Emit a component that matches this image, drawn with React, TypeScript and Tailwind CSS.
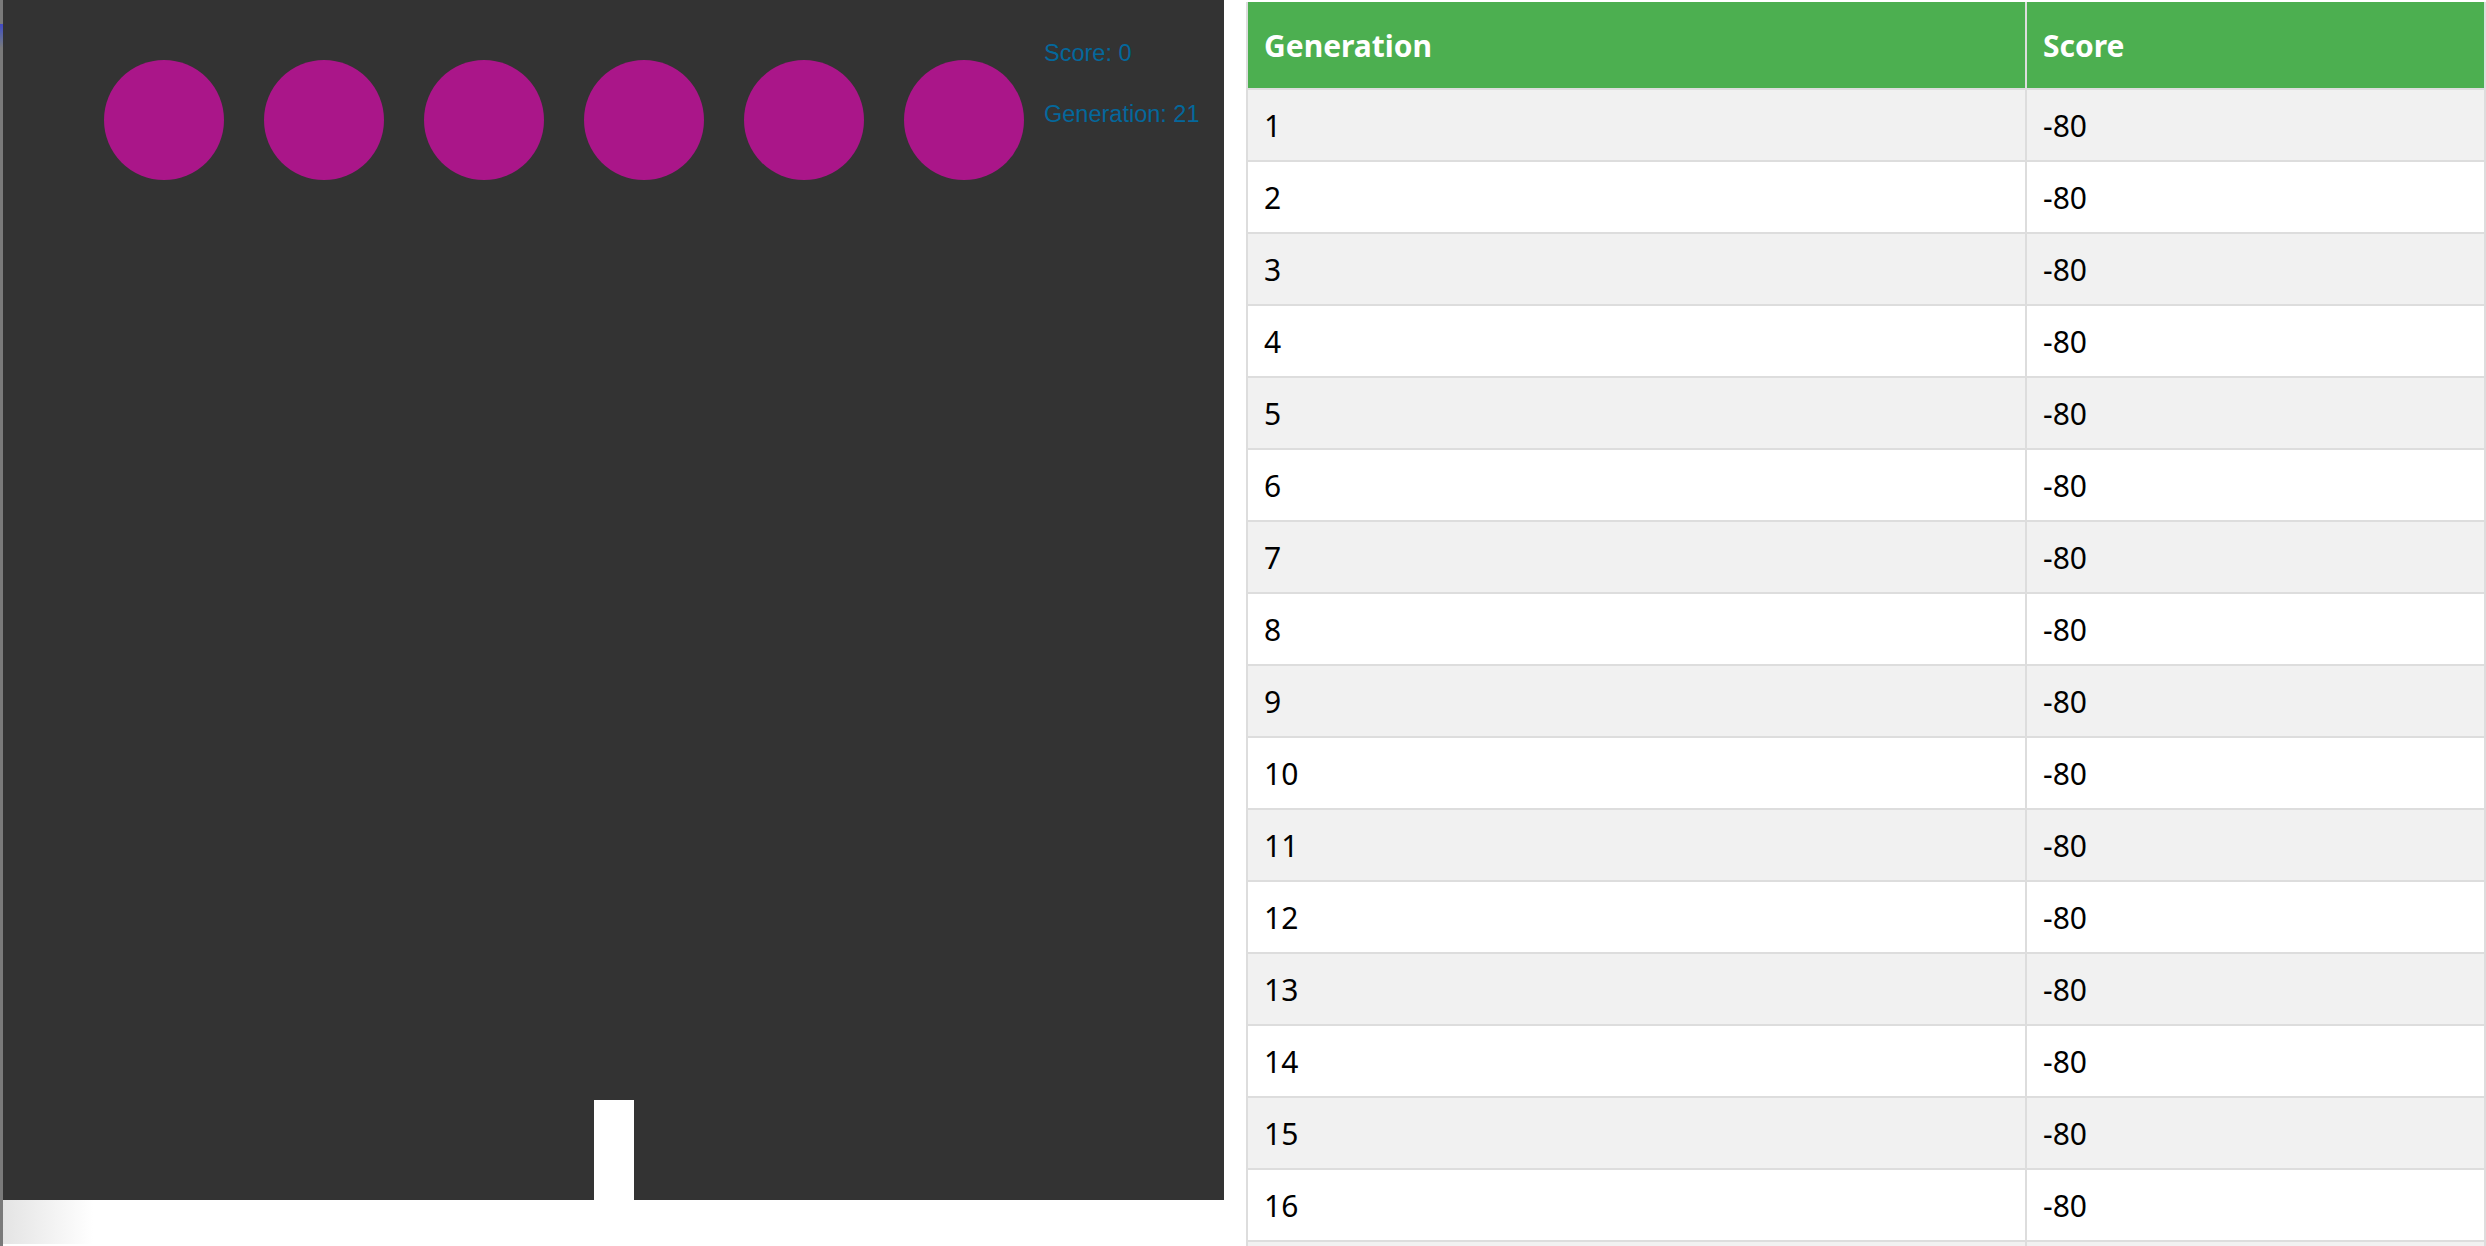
import React from 'react'

const ROWS = Array.from({ length: 17 }, (_, i) => ({ generation: i + 1, score: -80 }))
const BALLS = [0, 1, 2, 3, 4, 5]

function GameCanvas() {
  return (
    <div className="relative h-[1200px] w-[1221px] bg-[#333333] font-['Liberation_Sans',Arial,sans-serif]">
      {BALLS.map((i) => (
        <div
          key={i}
          className="absolute top-[60px] h-[120px] w-[120px] rounded-full bg-[#aa1689]"
          style={{ left: 101 + i * 160 }}
        />
      ))}
      <p className="absolute left-[1041px] top-[42px] text-[23.5px] leading-none text-[#04689c]">Score: 0</p>
      <p className="absolute left-[1041px] top-[103px] text-[23.5px] leading-none text-[#04689c]">Generation: 21</p>
      {/* paddle */}
      <div className="absolute left-[591px] top-[1100px] h-[100px] w-[40px] bg-white" />
    </div>
  )
}

function ScoreTable() {
  return (
    <div className="font-['Noto_Sans',sans-serif] text-black">
      <div className="flex h-[88px] border-b-2 border-r-2 border-[#dddddd] bg-[#4caf50] text-[30px] font-bold text-white">
        <div className="flex w-[779px] items-center border-l-2 border-[#dddddd] px-4">Generation</div>
        <div className="flex flex-1 items-center border-l-2 border-[#dddddd] px-4">Score</div>
      </div>
      {ROWS.map((r) => (
        <div
          key={r.generation}
          className={`flex h-[72px] border-b-2 border-r-2 border-[#dddddd] text-[30px] ${r.generation % 2 === 1 ? 'bg-[#f1f1f1]' : 'bg-white'}`}
        >
          <div className="flex w-[779px] items-center border-l-2 border-[#dddddd] px-4">{r.generation}</div>
          <div className="flex flex-1 items-center border-l-2 border-[#dddddd] px-4">{r.score}</div>
        </div>
      ))}
    </div>
  )
}

export default function App() {
  return (
    <div className="flex h-[1246px] w-[2486px] overflow-hidden bg-white">
      {/* window edge */}
      <div className="flex h-full w-[3px] flex-col bg-[#7a7a7a]">
        <div className="mt-[24px] h-[24px] bg-linear-to-b from-[#4348c4] to-[#7a7a7a]" />
      </div>
      <div className="flex flex-1 flex-col">
        <div className="h-[2px] bg-[#cfcfcf]" />
        <div className="flex">
          <div className="flex flex-col">
            <GameCanvas />
            <div className="h-[44px] w-[90px] bg-linear-to-r from-[#e4e4e4] to-white" />
          </div>
          <div className="ml-[22px] flex-1 pt-[2px]">
            <ScoreTable />
          </div>
        </div>
      </div>
    </div>
  )
}
